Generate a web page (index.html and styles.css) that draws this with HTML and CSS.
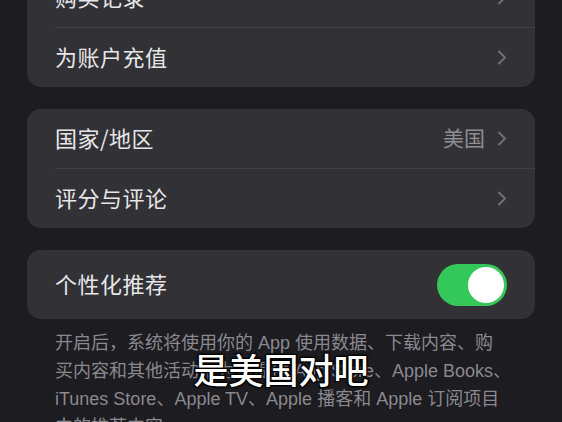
FILE: index.html
```html
<!DOCTYPE html>
<html lang="zh-CN">
<head>
  <meta charset="UTF-8">
  <meta name="viewport" content="width=device-width, initial-scale=1.0">
  <title>账户设置</title>
  <link rel="stylesheet" href="styles.css">
</head>
<body>

    <!-- 设置页面 -->
    <div class="page">

        <!-- 购买与充值 -->
        <div class="group group-top">
            <div class="row">
                <span class="label">购买记录</span>
                <svg class="chevron" viewBox="0 0 10 15"><path d="M2 1.5 L8 7.5 L2 13.5"/></svg>
            </div>
            <div class="row">
                <span class="label">为账户充值</span>
                <svg class="chevron" viewBox="0 0 10 15"><path d="M2 1.5 L8 7.5 L2 13.5"/></svg>
            </div>
        </div>

        <!-- 地区与评分 -->
        <div class="group">
            <div class="row">
                <span class="label">国家/地区</span>
                <span class="value">美国</span>
                <svg class="chevron" viewBox="0 0 10 15"><path d="M2 1.5 L8 7.5 L2 13.5"/></svg>
            </div>
            <div class="row">
                <span class="label">评分与评论</span>
                <svg class="chevron" viewBox="0 0 10 15"><path d="M2 1.5 L8 7.5 L2 13.5"/></svg>
            </div>
        </div>

        <!-- 个性化推荐 + 说明 -->
        <div class="section">
            <div class="group">
                <div class="row row-switch">
                    <span class="label">个性化推荐</span>
                    <span class="switch on"><span class="knob"></span></span>
                </div>
            </div>
            <p class="note">开启后，系统将使用你的 App 使用数据、下载内容、购<br>买内容和其他活动来为你提供 App Store、Apple Books、<br>iTunes Store、Apple TV、Apple 播客和 Apple 订阅项目<br>中的推荐内容。</p>
        </div>

    </div>

    <!-- 字幕 -->
    <div class="caption">是美国对吧</div>

</body>
</html>
```

FILE: styles.css
```css
body {
  margin: 0;
  background-color: #1d1c20;
  font-family: "Noto Sans CJK SC", "Noto Sans", sans-serif;
  color: #e6e6e9;
  overflow: hidden;
}

.page {
  padding: 0 27px;
  display: flex;
  flex-direction: column;
  gap: 22px;
}

/* 卡片分组 */
.group {
  background-color: #323136;
  border-radius: 14px;
  overflow: hidden;
}

.group-top {
  margin-top: -32px;
}

.row {
  height: 59px;
  display: flex;
  align-items: center;
  padding: 0 28px 0 28px;
  box-sizing: border-box;
}

.row + .row {
  height: 60px;
  border-top: 1px solid #404045;
  margin-left: 28px;
  padding-left: 0;
}

.row-switch {
  height: 69px;
}

.label {
  flex: 1;
  font-size: 22px;
  letter-spacing: 0.5px;
  position: relative;
  top: -2px;
}

.value {
  font-size: 21px;
  color: #8e8e93;
  margin-right: 12px;
  position: relative;
  top: -2px;
}

/* 右箭头 */
.chevron {
  width: 10px;
  height: 15px;
  fill: none;
  stroke: #717076;
  stroke-width: 2;
  stroke-linecap: round;
  stroke-linejoin: round;
}

/* 开关 */
.switch {
  width: 70px;
  height: 42px;
  border-radius: 21px;
  background-color: #34c759;
  display: flex;
  align-items: center;
  justify-content: flex-end;
  padding: 0 3px;
  box-sizing: border-box;
}

.knob {
  width: 36px;
  height: 36px;
  border-radius: 50%;
  background-color: #ffffff;
}

/* 说明文字 */
.note {
  margin: 10px 0 0;
  padding: 0 28px;
  font-family: "Liberation Sans", "Noto Sans CJK SC", sans-serif;
  font-size: 18px;
  line-height: 28px;
  color: #8a898f;
  white-space: nowrap;
}

/* 视频字幕 */
.caption {
  position: absolute;
  top: 343px;
  left: 0;
  right: 0;
  text-align: center;
  font-size: 35px;
  font-weight: 500;
  color: #ffffff;
  text-shadow: 0 0 2px #000, 0 0 3px #000, 1px 1px 1px #000, -1px -1px 1px #000, 1px -1px 1px #000, -1px 1px 1px #000;
}
```
